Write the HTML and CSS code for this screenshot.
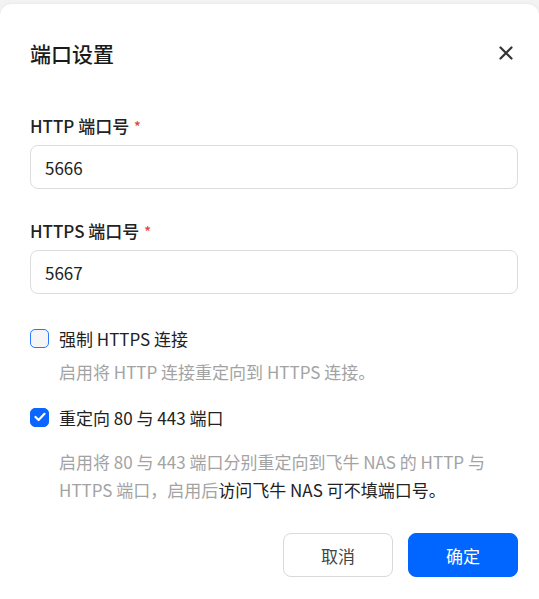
FILE: index.html
```
<!DOCTYPE html>
<html lang="zh-CN">
<head>
    <meta charset="UTF-8">
    <meta name="viewport" content="width=device-width, initial-scale=1.0">
    <title>端口设置</title>
    <link rel="stylesheet" href="styles.css">
</head>
<body>
<div class="dialog">
    <div class="dialog-head">
        <h1 class="title">端口设置</h1>
        <button class="close" aria-label="关闭">
            <svg width="14" height="14" viewBox="0 0 14 14">
                <path d="M1.5 1.5 L12.5 12.5 M12.5 1.5 L1.5 12.5" stroke="#333" stroke-width="2.2" stroke-linecap="round" fill="none"/>
            </svg>
        </button>
    </div>

    <div class="field field-first">
        <label class="label">HTTP 端口号 <span class="req">*</span></label>
        <input class="input" type="text" value="5666">
    </div>
    <div class="field">
        <label class="label">HTTPS 端口号 <span class="req">*</span></label>
        <input class="input" type="text" value="5667">
    </div>

    <div class="option">
        <label class="check">
            <span class="box"></span>
            <span>强制 HTTPS 连接</span>
        </label>
        <p class="desc">启用将 HTTP 连接重定向到 HTTPS 连接。</p>
    </div>
    <div class="option option-last">
        <label class="check">
            <span class="box checked">
                <svg width="12" height="10" viewBox="0 0 12 10">
                    <path d="M1.5 5 L4.6 8 L10.5 1.8" stroke="#fff" stroke-width="2.2" stroke-linecap="round" stroke-linejoin="round" fill="none"/>
                </svg>
            </span>
            <span>重定向 80 与 443 端口</span>
        </label>
        <p class="desc">启用将 80 与 443 端口分别重定向到飞牛 NAS 的 HTTP 与 HTTPS 端口，启用后<span class="dark">访问飞牛 NAS 可不填端口号。</span></p>
    </div>

    <div class="footer">
        <button class="btn">取消</button>
        <button class="btn btn-primary">确定</button>
    </div>
</div>
</body>
</html>
```

FILE: styles.css
```
*{
    margin:0;
    padding:0;
    box-sizing:border-box;
}
body{
    background-color:#f3f3f3;
    font-family:"Noto Sans CJK SC","Noto Sans",sans-serif;
    color:#222;
    overflow:hidden;
}
.dialog{
    margin-top:4px;
    width:539px;
    height:620px;
    background:#fff;
    border-radius:12px 12px 0 0;
    box-shadow:0 0 4px rgba(0,0,0,.06);
    padding:35px 21px 0 30px;
}
.dialog-head{
    display:flex;
    align-items:center;
    justify-content:space-between;
    height:28px;
}
.title{
    font-size:21px;
    font-weight:500;
    line-height:28px;
    color:#1a1a1a;
}
.close{
    border:none;
    background:none;
    width:24px;
    height:24px;
    display:flex;
    align-items:center;
    justify-content:center;
}
.field{
    width:488px;
    margin-top:30px;
}
.field-first{
    margin-top:47px;
}
.label{
    display:block;
    font-size:17px;
    font-weight:500;
    line-height:24px;
    color:#222;
}
.req{
    color:#e8413b;
    font-size:14px;
    vertical-align:top;
    margin-left:1px;
}
.input{
    display:block;
    margin-top:7px;
    width:100%;
    height:44px;
    border:1px solid #dcdcdc;
    border-radius:8px;
    padding:0 14px;
    font-family:inherit;
    font-size:17px;
    color:#222;
    outline:none;
}
.option{
    margin-top:32px;
    width:488px;
}
.option-last{
    margin-top:19px;
}
.check{
    display:flex;
    align-items:center;
    height:24px;
    font-size:17px;
    color:#222;
}
.box{
    width:19px;
    height:19px;
    border:1.5px solid #2a78ff;
    border-radius:5px;
    background:#f5f5f5;
    margin-right:10px;
    display:flex;
    align-items:center;
    justify-content:center;
}
.box.checked{
    background:#0a66ff;
    border-color:#0a66ff;
}
.desc{
    margin-top:8px;
    padding-left:29px;
    font-size:17px;
    line-height:28px;
    color:#a3a3a3;
}
.option-last .desc{
    margin-top:19px;
}
.desc .dark{
    color:#222;
}
.footer{
    width:488px;
    margin-top:29px;
    display:flex;
    justify-content:flex-end;
    gap:15px;
}
.btn{
    width:110px;
    height:44px;
    border:1px solid #d9d9d9;
    border-radius:8px;
    background:#fff;
    font-family:inherit;
    font-size:17px;
    color:#444;
}
.btn-primary{
    background:#0066ff;
    border-color:#0066ff;
    color:#fff;
}
```
